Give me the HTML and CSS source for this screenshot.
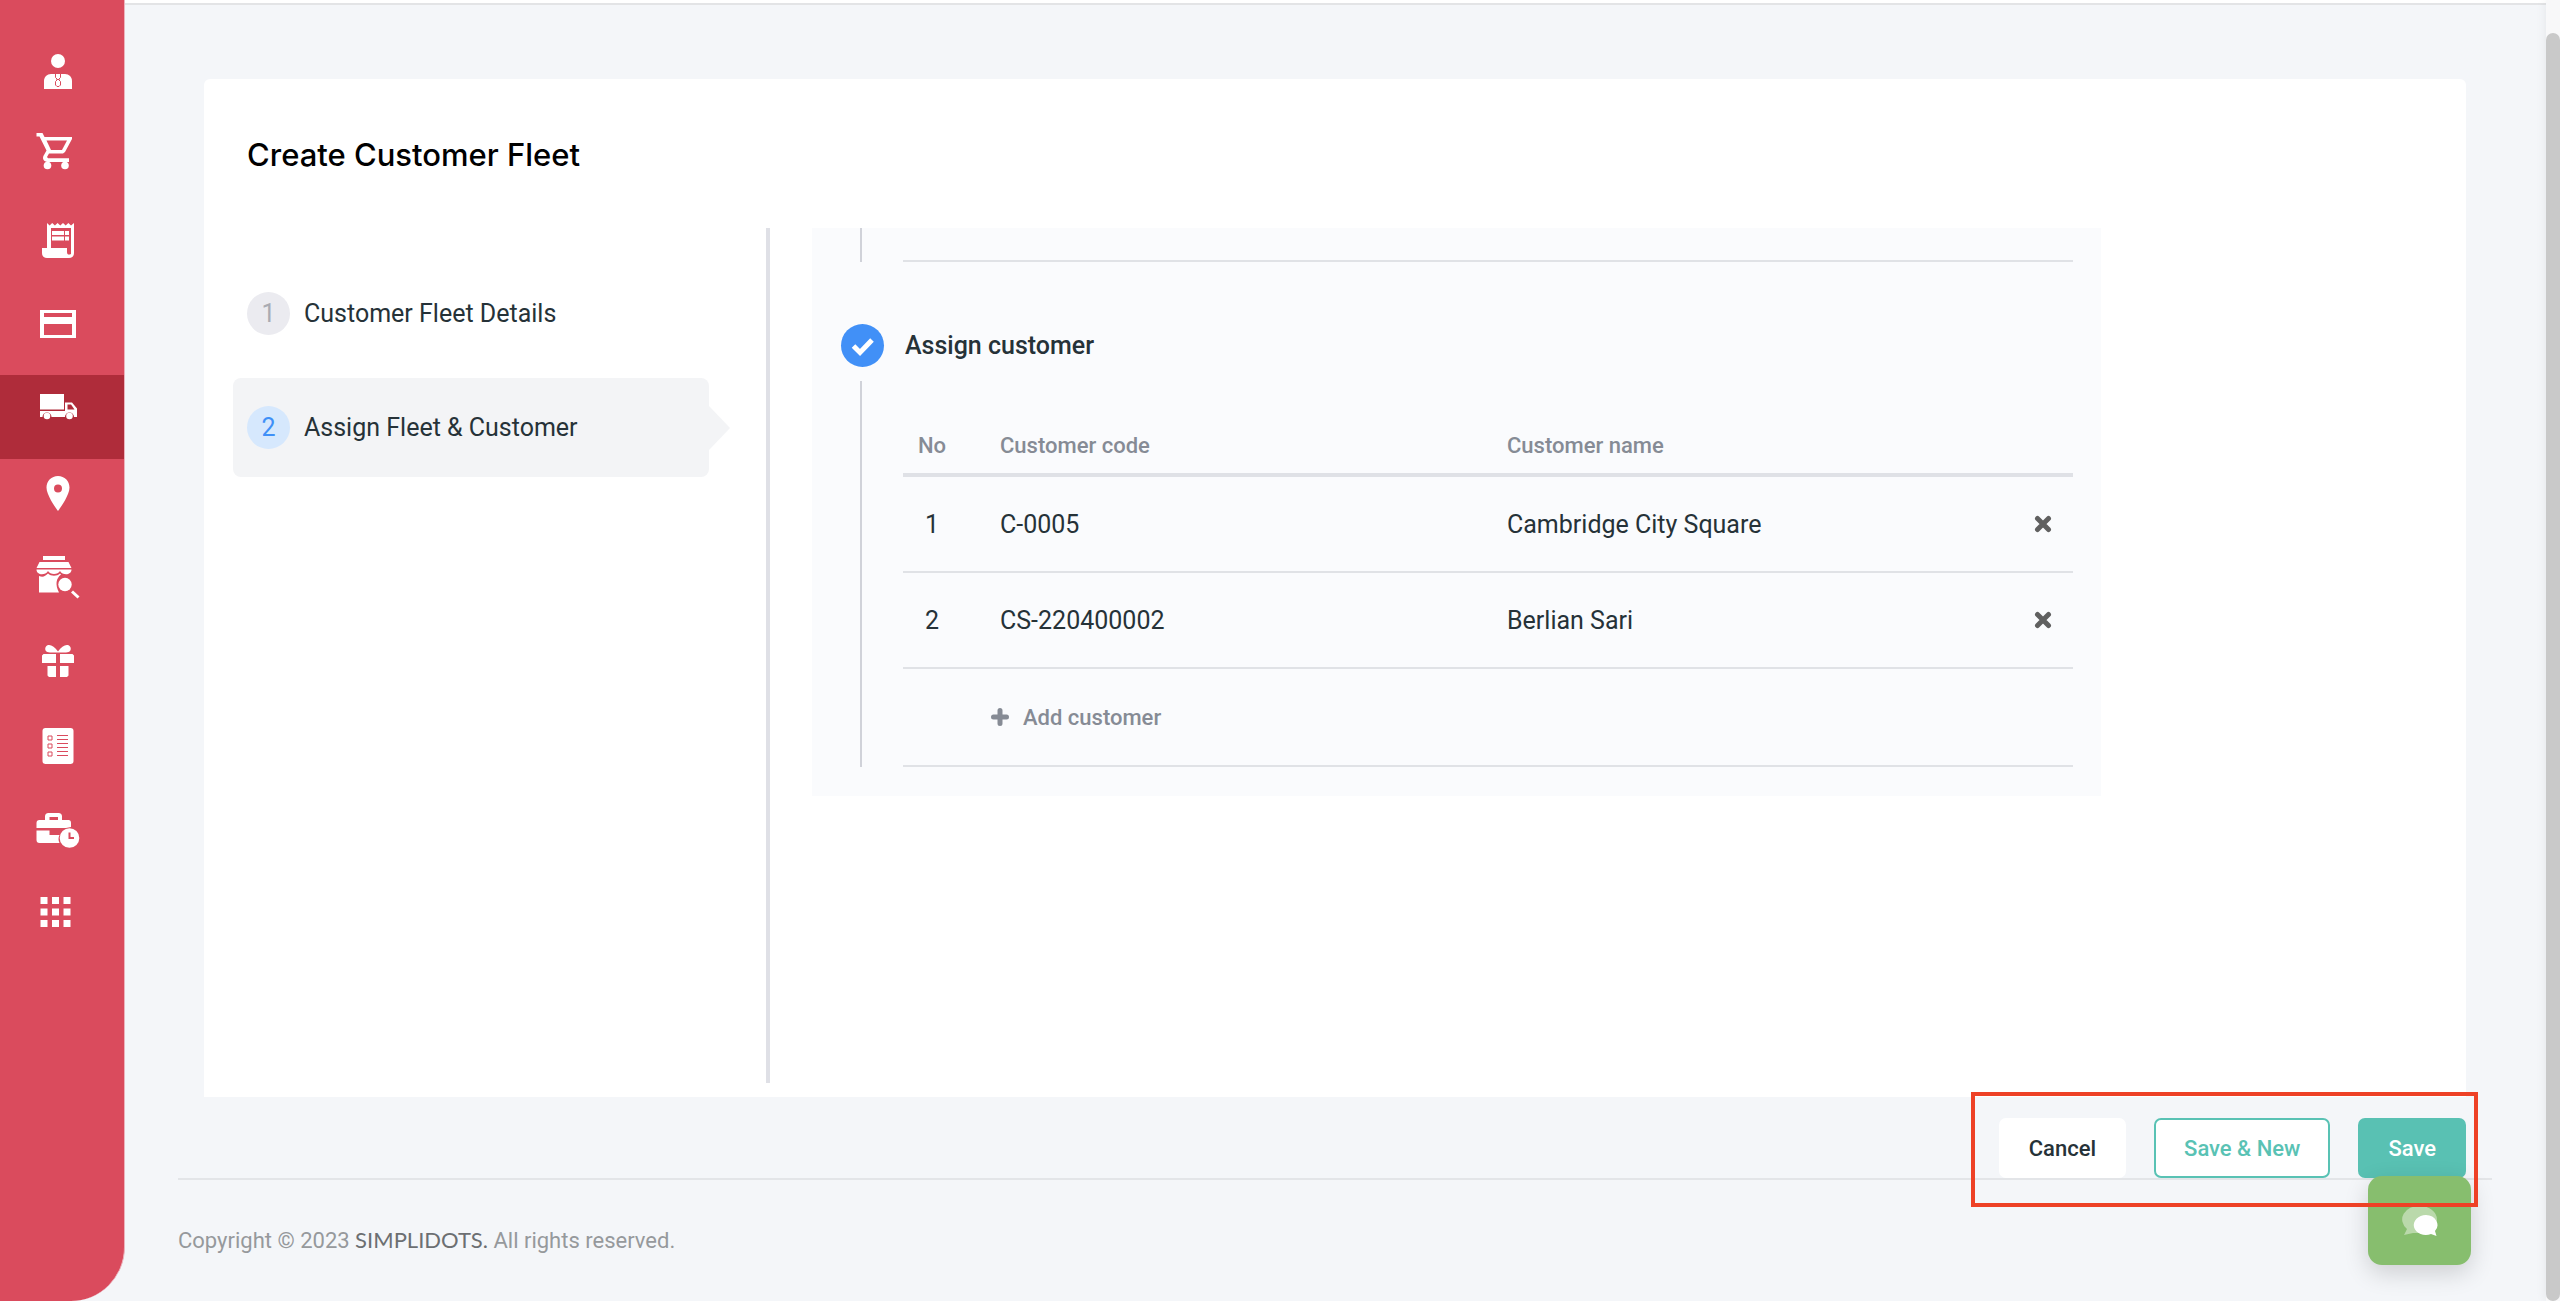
FILE: index.html
```html
<!DOCTYPE html>
<html lang="en">
<head>
<meta charset="utf-8">
<title>Create Customer Fleet</title>
<link rel="stylesheet" href="styles.css">
</head>
<body>
<div class="app">
  <nav class="sidebar" aria-label="Main">
    <a class="nav-item" href="#" aria-label="Employees"><svg class="nav-icon" viewBox="0 0 48 48"><circle cx="24" cy="13" r="7"/><path d="M10 41v-8c0-4 3-7 7-7h14c4 0 7 3 7 7v8z"/><path class="cut" d="M21.500 26v3.500l2 2-2 2v3.500l1.500 1.500h2l1.500-1.500v-3.500l-2-2 2-2V26M22.500 31.500h3"/></svg></a>
    <a class="nav-item" href="#" aria-label="Sales"><svg class="nav-icon" viewBox="0 5 48 48"><path d="M2.500 6h6l2 4h27.500v2l-7 13-2 1.500H15l-2 3.500 1 1.200h21V35H13c-4-1-5-4-3-7l2.500-4.500L5.500 9.500h-3z"/><circle cx="13.500" cy="38.500" r="3.800"/><circle cx="31" cy="38.500" r="3.800"/><path class="hole" d="M12.500 13.500h20.500L28 23H17z"/></svg></a>
    <a class="nav-item" href="#" aria-label="Invoices"><svg class="nav-icon" viewBox="0 0 48 48"><path d="M13 7l2.600 2.500L18.200 7l2.700 2.500L23.600 7l2.700 2.500L29 7l2.700 2.500L34.300 7l2.700 2.500L40 7v30c0 3-2 5-5 5H13c-3 0-5-2-5-5v-5h5z"/><path class="hole" d="M17 12h20v26c-2 1-4 1-4-2v-4H17z"/><path d="M18 15h12v4H18zM31 15h4v4h-4zM18 20.500h12v4H18zM31 20.500h4v4h-4z"/></svg></a>
    <a class="nav-item" href="#" aria-label="Payments"><svg class="nav-icon" viewBox="0 0 48 48"><path fill-rule="evenodd" d="M6 10h36v28H6zM10 13v4h28v-4zM10 24v11h28V24z"/></svg></a>
    <a class="nav-item active" href="#" aria-label="Fleet"><svg class="nav-icon" viewBox="0 0 48 48"><path d="M6 10h24v15.500H6zM31 18.500h7l5 6v8.500h-3a4.500 4.500 0 0 0-9 0H17.500a4.500 4.500 0 0 0-9 0H6v-6h25z"/><path class="hole" d="M33.500 20.500H37l3.500 5h-7z"/><circle cx="13" cy="32" r="3.300"/><circle cx="35.500" cy="32" r="3.300"/></svg></a>
    <a class="nav-item" href="#" aria-label="Locations"><svg class="nav-icon" viewBox="0 0 48 48"><path fill-rule="evenodd" d="M24 7c6.500 0 11.500 5 11.500 11.500C35.500 27 24 42 24 42S12.500 27 12.500 18.500C12.500 12 17.500 7 24 7zm0 8.500a4 4 0 1 0 0 8 4 4 0 0 0 0-8z"/></svg></a>
    <a class="nav-item" href="#" aria-label="Store search"><svg class="nav-icon" viewBox="0 0 48 48"><path d="M9 3h22v4H9zM5.500 9h29l3 6h-35zM2.500 16.500h35c0 6-9 6-11.500 1.500-2 4-10 4-12 0-2.500 4.500-11.500 4.500-11.500-1.500zM5 23c4 1.500 6 .5 9-2.500 3 3 9 3 12 0l1 1c-5 4-6 10-2 18H5z"/><circle cx="31" cy="31.500" r="6.700"/><path class="line" d="M38 38.500l6.500 6"/></svg></a>
    <a class="nav-item" href="#" aria-label="Promotions"><svg class="nav-icon" viewBox="0 0 48 48"><path d="M24 14.500C20 9 15 6 12 9.500c-2 3 0 6 4 6h16c4 0 6-3 4-6-3-3.500-8-.5-12 5z"/><path d="M9.500 17H22v9H8v-7.500zM26 17h12.500l1.500 1.500V26H26zM13.500 29H22v11h-7l-1.500-1.500zM26 29h8.500v9.500L33 40h-7z"/></svg></a>
    <a class="nav-item" href="#" aria-label="Reports"><svg class="nav-icon" viewBox="0 0 48 48"><rect x="8.500" y="7" width="31" height="36" rx="3"/><path class="cut" d="M14 15h4v4h-4zM14 23h4v4h-4zM14 31h4v4h-4zM23 14.500h11M23 18.500h11M23 22.500h11M23 26.500h11M23 30.500h11M23 34.500h11"/></svg></a>
    <a class="nav-item" href="#" aria-label="Work hours"><svg class="nav-icon" viewBox="0 0 48 48"><path fill-rule="evenodd" d="M11 15v-3.500Q11 8 14.500 8h10q3.500 0 3.500 3.500V15h6.500q2.500 0 2.500 3v4l-5 1H2.500v-5q0-3 3-3zM15.500 12v3h8.500v-3z"/><path d="M2.500 25.500h13V30h10q-2 4 0 8H5.500q-3 0-3-3z"/><circle cx="35.500" cy="33" r="9.800"/><path class="cut clock" d="M35.500 27.500V33H40"/></svg></a>
    <a class="nav-item" href="#" aria-label="More apps"><svg class="nav-icon" viewBox="0 0 48 48"><path d="M6.500 8h7v7h-7zM18 8h7v7h-7zM29.500 8h7v7h-7zM6.500 19.500h7v7h-7zM18 19.500h7v7h-7zM29.500 19.500h7v7h-7zM6.500 31h7v7h-7zM18 31h7v7h-7zM29.500 31h7v7h-7z"/></svg></a>
  </nav>

  <div class="page">
    <div class="topbar"></div>
    <main class="content">
      <section class="card">
        <h1 class="card-title">Create Customer Fleet</h1>
        <div class="card-body">
          <ol class="steps">
            <li class="step"><span class="step-no">1</span>Customer Fleet Details</li>
            <li class="step current"><span class="step-no">2</span>Assign Fleet &amp; Customer</li>
          </ol>
          <div class="panel">
            <div class="previous"><div class="rail"></div><div class="previous-end"></div></div>
            <h2 class="section-title"><span class="check"><svg viewBox="0 0 43 43"><path d="M12.500 22l6.500 6.500L31 16"/></svg></span>Assign customer</h2>
            <div class="assign">
              <div class="rail"></div>
              <table class="customers">
                <colgroup><col class="col-no"><col class="col-code"><col><col class="col-remove"></colgroup>
                <thead><tr><th class="no">No</th><th>Customer code</th><th>Customer name</th><th></th></tr></thead>
                <tbody>
                  <tr><td class="no">1</td><td>C-0005</td><td>Cambridge City Square</td><td class="remove"><button class="icon-button" type="button" aria-label="Remove Cambridge City Square"><svg class="remove-icon" viewBox="0 0 18 18"><path d="M3.500 3.500l11 11M14.500 3.500l-11 11"/></svg></button></td></tr>
                  <tr><td class="no">2</td><td>CS-220400002</td><td>Berlian Sari</td><td class="remove"><button class="icon-button" type="button" aria-label="Remove Berlian Sari"><svg class="remove-icon" viewBox="0 0 18 18"><path d="M3.500 3.500l11 11M14.500 3.500l-11 11"/></svg></button></td></tr>
                  <tr class="add-row"><td></td><td colspan="3" class="add-cell"><button class="add-button" type="button"><svg class="plus" viewBox="0 0 18 18"><path d="M9 2.500v13M2.500 9h13"/></svg>Add customer</button></td></tr>
                </tbody>
              </table>
            </div>
          </div>
        </div>
      </section>
      <div class="actions">
        <button class="btn cancel" type="button">Cancel</button>
        <button class="btn outline" type="button">Save &amp; New</button>
        <button class="btn primary" type="button">Save</button>
      </div>
    </main>
    <footer class="footer">Copyright © 2023 <a class="brand" href="#">SIMPLIDOTS.</a> All rights reserved.</footer>
  </div>
</div>
<button class="chat" type="button" aria-label="Chat"><svg class="chat-icon" viewBox="0 0 36 36"><path class="bubble-back" d="M18 3a17 13.500 0 0 1 0 27h-7l-9 2 3-6A16.500 13.500 0 0 1 18 3z"/><path class="bubble-front" d="M24 12a12 10 0 0 1 9 16l1.500 5-5.500-2A12 10 0 1 1 24 12z"/></svg></button>
<div class="highlight"></div>
<div class="scrollbar"><div class="thumb"></div></div>
</body>
</html>
```
FILE: styles.css
```css
* { box-sizing: border-box; }

body {
  margin: 0;
  font-family: Roboto, "Liberation Sans", sans-serif;
  font-size: 25px;
  color: #263238;
  background: #f4f6f9;
}

button { font-family: inherit; cursor: pointer; }

.app { display: flex; min-height: 100vh; }

.sidebar {
  flex: 0 0 125px;
  padding-top: 39px;
  background: #da4b5d;
  border-right: 1px solid #ecb3bd;
  border-bottom-right-radius: 54px;
}

.nav-item {
  display: flex;
  justify-content: center;
  height: 84px;
  padding: 9px 8px 0 0;
}
.nav-item.active { background: #af2c3a; }
.nav-item.active ~ .nav-item { padding-top: 10px; }
.nav-icon { width: 48px; height: 48px; fill: #fff; }
.nav-icon .hole { fill: #da4b5d; }
.active .nav-icon .hole { fill: #af2c3a; }
.nav-icon .line { stroke: #fff; stroke-width: 3; }
.nav-icon .cut { fill: none; stroke: #da4b5d; stroke-width: 1; }
.nav-icon .clock { stroke-width: 2; }

.page { flex: 1; min-width: 0; display: flex; flex-direction: column; }
.topbar { height: 5px; background: #fff; border-bottom: 2px solid #e3e4e6; }
.content { padding: 74px 94px 0 79px; }

.card { background: #fff; border-radius: 6px 6px 0 0; }
.card-title {
  margin: 0;
  padding: 55px 43px 53px;
  font-family: Inter, Roboto, sans-serif;
  font-size: 31px;
  line-height: 41px;
  font-weight: 500;
  color: #000;
}
.card-body { display: flex; min-height: 869px; padding-bottom: 14px; }

.steps {
  flex: 0 0 566px;
  margin: 0;
  padding: 36px 57px 0 29px;
  list-style: none;
  border-right: 4px solid #dfe0e6;
}
.step {
  position: relative;
  display: flex;
  align-items: center;
  gap: 14px;
  height: 99px;
  margin-bottom: 15px;
  padding-left: 14px;
  border-radius: 8px;
}
.step.current { background: #f3f4f6; }
.step.current::after {
  content: "";
  position: absolute;
  left: 100%;
  top: 28px;
  border: solid transparent;
  border-width: 22px 0 22px 21px;
  border-left-color: #f3f4f6;
}
.step-no {
  width: 43px;
  line-height: 43px;
  border-radius: 50%;
  text-align: center;
  color: #a9abb3;
  background: #ebebf0;
}
.current .step-no { color: #3f90f7; background: #d6e8fd; }

.panel {
  flex: 0 1 1289px;
  align-self: flex-start;
  margin-left: 42px;
  padding: 0 28px 29px 29px;
  background: #fafbfd;
}
.rail { flex: 0 0 2px; margin: 0 41px 0 19px; background: #d0d2d9; }
.previous { display: flex; height: 34px; }
.previous-end { flex: 1; border-bottom: 2px solid #e0e2e6; }
.section-title {
  display: flex;
  align-items: center;
  gap: 21px;
  margin: 62px 0 14px;
  font-size: 25px;
  font-weight: 500;
}
.check { width: 43px; height: 43px; border-radius: 50%; background: #4190f7; }
.check svg { display: block; fill: none; stroke: #fff; stroke-width: 5; }

.assign { display: flex; }
.customers { flex: 1; border-collapse: separate; border-spacing: 0; table-layout: fixed; }
.col-no { width: 58px; }
.col-code { width: 507px; }
.col-remove { width: 80px; }
.customers th, .customers td { padding: 0 0 0 39px; text-align: left; font-weight: 400; }
.customers th {
  height: 96px;
  padding-top: 36px;
  font-size: 22px;
  font-weight: 500;
  color: #868b95;
  border-bottom: 4px solid #dfe1e6;
}
.customers td { height: 96px; border-bottom: 2px solid #e0e2e6; }
.customers .add-row td { height: 98px; }
.customers .no { padding-left: 0; text-align: center; }
.customers .remove { padding: 0 21px 0 0; text-align: right; }
.icon-button { display: block; margin-left: auto; padding: 0; border: 0; background: none; }
.remove-icon { display: block; width: 18px; height: 18px; stroke: #606060; stroke-width: 5; stroke-linecap: round; }
.customers .add-cell { padding-left: 30px; }
.add-button {
  display: flex;
  align-items: center;
  gap: 14px;
  padding: 0;
  border: 0;
  background: none;
  font-size: 22px;
  font-weight: 500;
  color: #868b95;
}
.plus { width: 18px; height: 18px; stroke: #868b95; stroke-width: 5; stroke-linecap: round; }

.actions { display: flex; justify-content: flex-end; gap: 28px; padding-top: 21px; }
.btn {
  height: 60px;
  padding: 0 28px;
  border: 2px solid transparent;
  border-radius: 7px;
  font-size: 22px;
  font-weight: 500;
}
.cancel { color: #263238; background: #fff; }
.outline { color: #59c2b4; background: #fff; border-color: #59c2b4; }
.primary { color: #fff; background: #59c1b3; }

.footer {
  margin: 0 68px 0 53px;
  padding-top: 46px;
  border-top: 2px solid #e3e5e8;
  font-size: 22px;
  line-height: 28px;
  color: #96999c;
}
.brand { font-family: Lato, sans-serif; color: #6c6f72; text-decoration: none; }

.chat {
  position: fixed;
  right: 89px;
  bottom: 36px;
  display: flex;
  align-items: center;
  justify-content: center;
  width: 103px;
  height: 89px;
  border: 0;
  border-radius: 14px;
  background: #87be6e;
  box-shadow: 0 8px 24px rgba(0, 0, 0, .16);
}
.chat-icon { width: 36px; height: 36px; }
.bubble-back { fill: #bad9ab; }
.bubble-front { fill: #fff; }

.highlight {
  position: fixed;
  right: 82px;
  bottom: 94px;
  width: 507px;
  height: 115px;
  border: 4px solid #ee4126;
}

.scrollbar {
  position: fixed;
  top: 0;
  right: 0;
  bottom: 0;
  width: 14px;
  padding-top: 33px;
  background: #f8f8f9;
  box-shadow: -2px 0 10px rgba(0, 0, 0, .05);
}
.thumb { height: 100%; border-radius: 7px; background: #c9c9c9; }
```
